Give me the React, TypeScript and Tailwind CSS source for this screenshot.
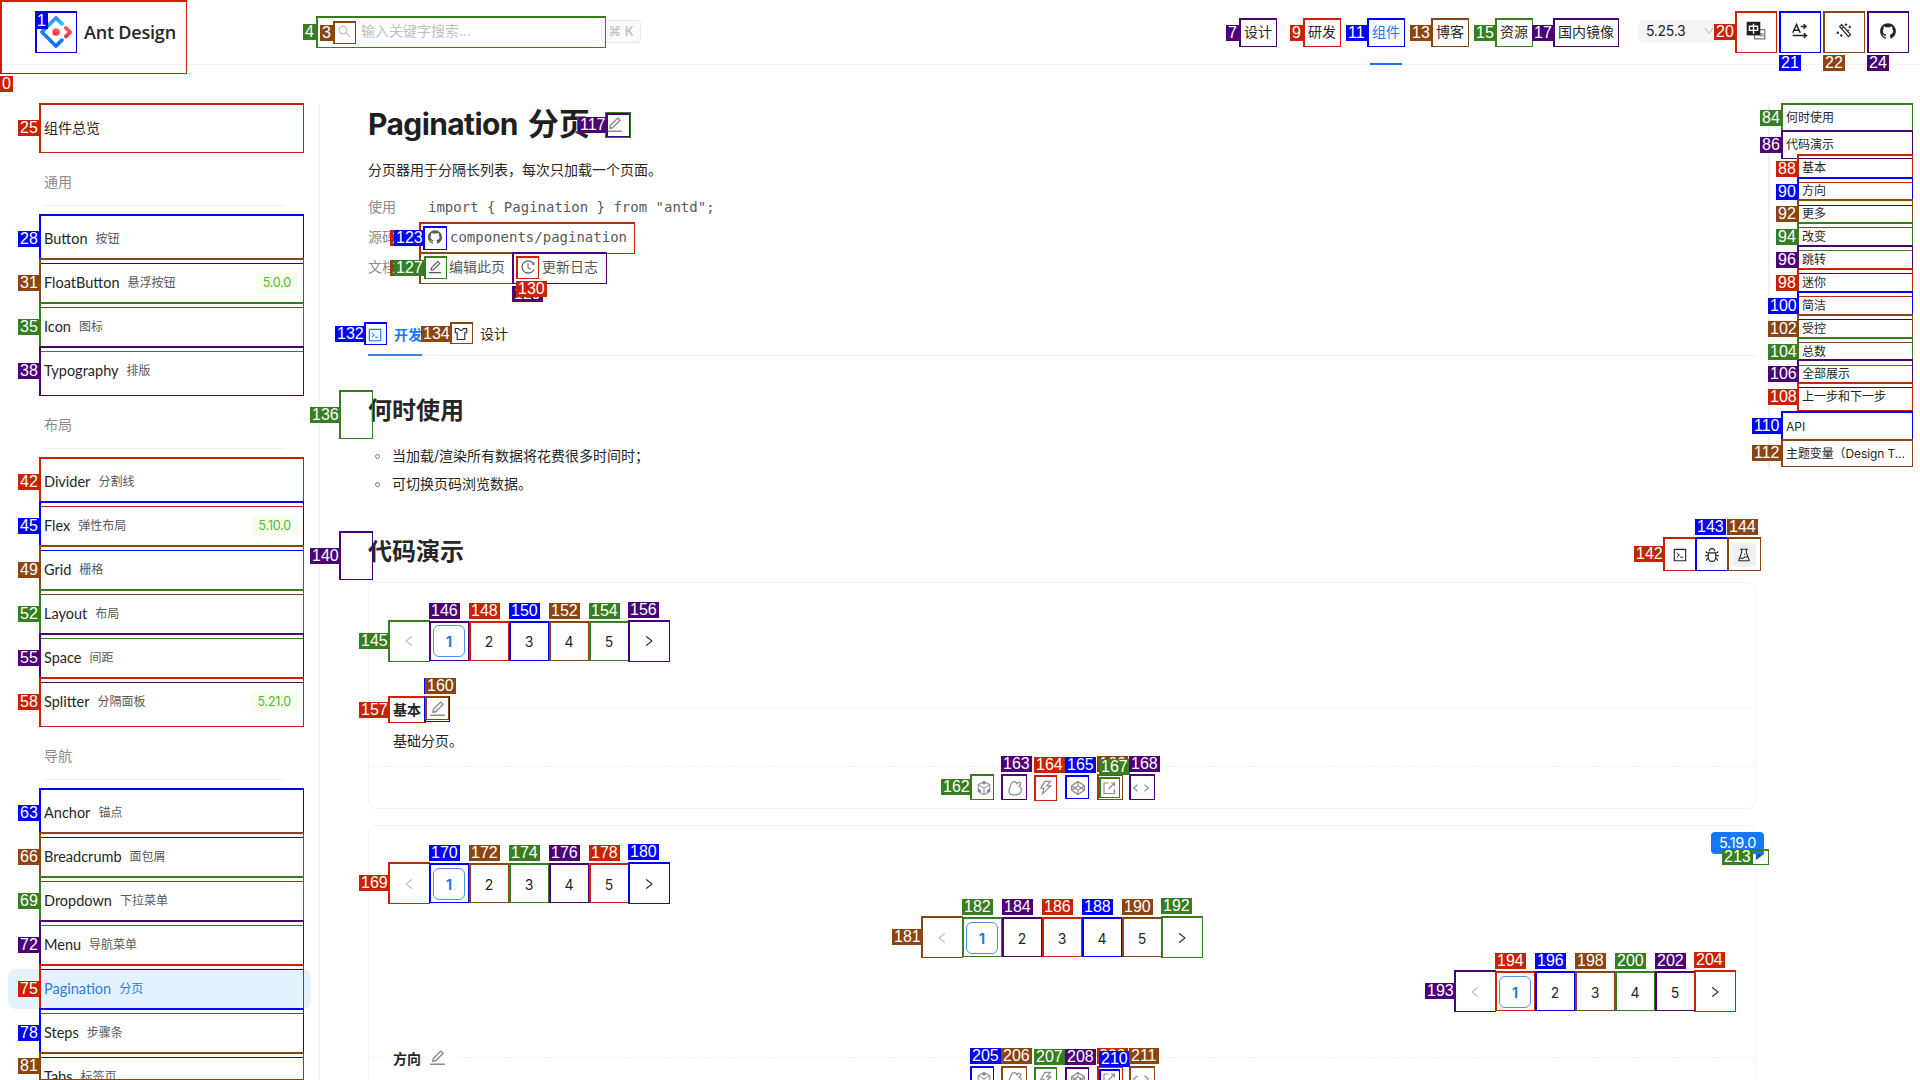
import React from 'react';
import {
  AiOutlineSearch, AiOutlineDown, AiFillGithub, AiOutlineEdit, AiOutlineHistory, AiOutlineSkin,
  AiOutlineCode, AiOutlineBug, AiOutlineExperiment, AiOutlineThunderbolt, AiOutlineCodepen,
  AiOutlineCodeSandbox, AiOutlineLeft, AiOutlineRight,
} from 'react-icons/ai';

type Tone = 'r' | 'b' | 'n' | 'g' | 'p';
// id, tone, box [left, top, right, bottom], label [left, top]
type Mark = [number, Tone, number, number, number, number, number, number];

const FILL: Record<Tone, string> = {
  r: 'bg-[#c92200]', b: 'bg-[#0000ff]', n: 'bg-[#8b4513]', g: 'bg-[#377d22]', p: 'bg-[#4b0076]',
};
const LINE: Record<Tone, string> = {
  r: 'border-[#c92200]', b: 'border-[#0000ff]', n: 'border-[#8b4513]', g: 'border-[#377d22]', p: 'border-[#4b0076]',
};

const side = (id: number, tone: Tone, top: number): Mark => [id, tone, 39, top, 304, top + 50, 18, top + 17];
const sub = (id: number, tone: Tone, top: number): Mark =>
  [id, tone, 1797, top, 1913, top + 29, id > 99 ? 1768 : 1776, top + 7];
const pager = (ids: number[], tones: Tone[], x: number, y: number): Mark[] =>
  ids.map((id, i): Mark => {
    if (i === 0) return [id, tones[i], x, y, x + 42, y + 42, x - 29, y + 13];
    if (i === 6) return [id, tones[i], x + 240, y, x + 282, y + 42, x + 240, y - 18];
    const l = x + 1 + i * 40;
    return [id, tones[i], l, y + 1, l + 40, y + 41, l, y - 17];
  });

const MARKS: Mark[] = [
  [0, 'r', 0, 0, 187, 74, 0, 76],
  [1, 'b', 35, 11, 77, 53, 35, 13],
  [4, 'g', 316, 16, 606, 48, 303, 24],
  [3, 'n', 333, 21, 356, 44, 320, 25],
  [7, 'p', 1239, 18, 1277, 47, 1226, 25],
  [9, 'r', 1303, 18, 1341, 47, 1290, 25],
  [11, 'b', 1367, 18, 1405, 47, 1346, 25],
  [13, 'n', 1431, 18, 1469, 47, 1410, 25],
  [15, 'g', 1495, 18, 1533, 47, 1474, 25],
  [17, 'p', 1553, 18, 1619, 47, 1532, 25],
  [20, 'r', 1735, 11, 1777, 53, 1714, 24],
  [21, 'b', 1779, 11, 1821, 53, 1779, 55],
  [22, 'n', 1823, 11, 1865, 53, 1823, 55],
  [24, 'p', 1867, 11, 1909, 53, 1867, 55],
  side(25, 'r', 103),
  side(28, 'b', 214), side(31, 'n', 258), side(35, 'g', 302), side(38, 'p', 346),
  side(42, 'r', 457), side(45, 'b', 501), side(49, 'n', 545), side(52, 'g', 589), side(55, 'p', 633), side(58, 'r', 677),
  side(63, 'b', 788), side(66, 'n', 832), side(69, 'g', 876), side(72, 'p', 920), side(75, 'r', 964), side(78, 'b', 1008),
  [81, 'n', 39, 1052, 304, 1080, 18, 1058],
  [84, 'g', 1781, 103, 1913, 131, 1760, 110],
  [86, 'p', 1781, 130, 1913, 159, 1760, 137],
  sub(88, 'r', 154), sub(90, 'b', 177), sub(92, 'n', 199), sub(94, 'g', 222), sub(96, 'p', 245), sub(98, 'r', 268),
  sub(100, 'b', 291), sub(102, 'n', 314), sub(104, 'g', 337), sub(106, 'p', 359), sub(108, 'r', 382),
  [110, 'b', 1781, 411, 1913, 440, 1752, 418],
  [112, 'n', 1781, 439, 1913, 467, 1752, 445],
  [116, 'g', 605, 112, 631, 138, 577, 117],
  [117, 'p', 606, 113, 630, 137, 578, 117],
  [122, 'r', 419, 222, 635, 254, 390, 230],
  [123, 'b', 423, 226, 447, 250, 394, 230],
  [126, 'n', 419, 252, 513, 284, 390, 260],
  [127, 'g', 424, 256, 447, 279, 394, 260],
  [129, 'p', 512, 252, 607, 284, 512, 286],
  [130, 'r', 516, 256, 539, 279, 516, 281],
  [132, 'b', 364, 322, 387, 345, 335, 326],
  [134, 'n', 450, 322, 473, 344, 421, 326],
  [136, 'g', 339, 390, 373, 439, 310, 407],
  [140, 'p', 339, 531, 373, 580, 310, 548],
  [142, 'r', 1663, 537, 1696, 571, 1634, 546],
  [143, 'b', 1695, 537, 1728, 571, 1695, 519],
  [144, 'n', 1727, 537, 1761, 571, 1727, 519],
  ...pager([145, 146, 148, 150, 152, 154, 156], ['g', 'p', 'r', 'b', 'n', 'g', 'p'], 388, 620),
  [157, 'r', 388, 696, 426, 723, 359, 702],
  [159, 'b', 424, 696, 450, 722, 424, 678],
  [160, 'n', 425, 696, 449, 720, 425, 678],
  [162, 'g', 970, 774, 994, 800, 941, 779],
  [163, 'p', 1001, 774, 1027, 800, 1001, 756],
  [164, 'r', 1034, 775, 1057, 801, 1034, 757],
  [165, 'b', 1065, 775, 1089, 799, 1065, 757],
  [166, 'n', 1097, 774, 1123, 800, 1097, 756],
  [167, 'g', 1099, 777, 1120, 798, 1099, 759],
  [168, 'p', 1129, 774, 1155, 800, 1129, 756],
  ...pager([169, 170, 172, 174, 176, 178, 180], ['r', 'b', 'n', 'g', 'p', 'r', 'b'], 388, 862),
  ...pager([181, 182, 184, 186, 188, 190, 192], ['n', 'g', 'p', 'r', 'b', 'n', 'g'], 921, 916),
  ...pager([193, 194, 196, 198, 200, 202, 204], ['p', 'r', 'b', 'n', 'g', 'p', 'r'], 1454, 970),
  [205, 'b', 970, 1066, 994, 1092, 970, 1048],
  [206, 'n', 1001, 1066, 1027, 1092, 1001, 1048],
  [207, 'g', 1034, 1067, 1057, 1093, 1034, 1049],
  [208, 'p', 1065, 1067, 1089, 1091, 1065, 1049],
  [209, 'r', 1097, 1066, 1123, 1092, 1097, 1048],
  [210, 'b', 1099, 1069, 1120, 1090, 1099, 1051],
  [211, 'n', 1129, 1066, 1155, 1092, 1129, 1048],
  [213, 'g', 1751, 849, 1769, 865, 1722, 849],
];

function MarkLayer() {
  return (
    <div className="pointer-events-none absolute inset-0 z-20">
      {MARKS.map(([id, tone, l, t, r, b]) => (
        <div key={id} className={`absolute border-t-2 border-l-2 border-r border-b ${LINE[tone]}`}
          style={{ left: l, top: t, width: r - l, height: b - t }} />
      ))}
      {MARKS.map(([id, tone, , , , , x, y]) => (
        <span key={id} className={`absolute h-4 px-[2px] font-["Liberation_Sans",sans-serif] text-[16px] leading-4 text-white ${FILL[tone]}`}
          style={{ left: x, top: y }}>{id}</span>
      ))}
    </div>
  );
}

function Logo() {
  return (
    <svg viewBox="0 0 200 200" className="size-8">
      <defs>
        <linearGradient id="lg1" x1="62%" y1="0%" x2="108%" y2="64%">
          <stop offset="0" stopColor="#4285EB" /><stop offset="1" stopColor="#2EC7FF" />
        </linearGradient>
        <linearGradient id="lg2" x1="69%" y1="0%" x2="54%" y2="108%">
          <stop offset="0" stopColor="#29CDFF" /><stop offset=".38" stopColor="#148EFF" /><stop offset="1" stopColor="#0A60FF" />
        </linearGradient>
        <linearGradient id="lg3" x1="69%" y1="-13%" x2="17%" y2="115%">
          <stop offset="0" stopColor="#FA816E" /><stop offset=".41" stopColor="#F74A5C" /><stop offset="1" stopColor="#F51D2C" />
        </linearGradient>
      </defs>
      <path fill="url(#lg2)" d="M91.6 4.2 4.2 91.5a11.800 11.800 0 0 0 0 16.700l87.400 87.300a11.800 11.800 0 0 0 16.700 0l36.600-36.600c4.500-4.500 4.500-11.900 0-16.400s-11.800-4.500-16.400 0l-27.400 27.700c-1.200 1.200-2.900 1.200-4 0l-68.500-68.400c-1.200-1.200-1.200-2.900 0-4l68.500-68.400c1.100-1.200 2.800-1.200 4 0l27.400 27.600c4.600 4.500 11.900 4.500 16.400 0s4.500-11.900 0-16.400L108 4.100c-4.600-4.500-12-4.500-16.400.1Z" />
      <path fill="url(#lg1)" d="M91.600 4.200 50 46l17 17 30-33.600c1.100-1.200 2.800-1.200 4 0l27.400 27.600c4.600 4.500 11.900 4.500 16.400 0s4.500-11.900 0-16.400L108 4.100c-4.600-4.500-12-4.500-16.400.1Z" />
      <path fill="url(#lg3)" d="M153.700 135.900c4.500 4.500 11.800 4.500 16.400 0l26.500-26.600a11.700 11.700 0 0 0 0-16.600l-26.800-26.700c-4.500-4.500-11.900-4.500-16.400 0s-4.500 11.900 0 16.400l16.700 16.700c1.200 1.200 1.200 2.900 0 4l-16.400 16.400c-4.500 4.500-4.500 11.900 0 16.400Z" />
      <circle cx="100.800" cy="100.400" r="23.600" fill="url(#lg3)" />
    </svg>
  );
}

const LangIcon = () => (
  <svg viewBox="0 0 20 20" className="size-5">
    <path fill="#fff" stroke="#777" strokeWidth="1.200" d="M8.600 8.600h10.200v9.300H8.600z" />
    <path fill="none" stroke="#777" strokeWidth="1.100" d="M14.900 15.800v-3.600M14.900 13.200q2.100-1.300 2.100.8v1.800" />
    <path fill="#1f1f1f" d="M.7.800h13.600v13.600H.7z" />
    <path fill="none" stroke="#fff" strokeWidth="1.400" d="M3.400 5.200h8.200v4.200H3.400zM7.500 2.700v10" />
  </svg>
);
const DirectionIcon = () => (
  <svg viewBox="0 0 20 20" className="size-5" fill="none" stroke="#222" strokeWidth="1.500">
    <path d="M2.800 11.800 6.500 3.500l3.700 8.300M4.100 9.200h4.700M10.800 5.500h5M13.600 3.300 16 5.500l-2.400 2.200M2.800 14.600h13.500M13.800 12.200l2.600 2.400-2.600 2.400" />
  </svg>
);
const ThemeIcon = () => (
  <svg viewBox="0 0 20 20" className="size-5" fill="none" stroke="#222" strokeWidth="1.200">
    <path d="m5.600 5.600 2-1.900 8.900 10-2 1.900zM7.500 7.700l1.900-1.800" />
    <path d="M10.800 3.600h2.400M12 2.400V4.800M14.500 6h2.600M15.800 4.700v2.600M2.600 11.800H5M3.800 10.600V13M6 14.500h2.600M7.300 13.200v2.600M13.500 9.300h1.500" />
  </svg>
);
const StackIcon = () => (
  <svg viewBox="0 0 16 16" className="size-4" fill="none" stroke="currentColor" strokeWidth="1.200">
    <path d="M4.200 3.900C5.300 1.600 7.700.8 9 2.300c.5.600.6 1.300.4 2 .7-1.200 1.800-2.400 3.200-1.900 1.600.6 1.100 2.900-.4 3.900 1.500.6 2.300 1.900 2.100 3.600-.3 3-2.300 4.900-5.400 4.900H5.700c-2.700 0-4.200-2-3.700-4.900z" />
  </svg>
);
const OpenIcon = () => (
  <svg viewBox="0 0 16 16" className="size-4" fill="none" stroke="currentColor" strokeWidth="1.200">
    <path d="M7.500 3H3v10.500h10.500V9M10 3h3.500v3.500M13.300 3.200 7.500 9" />
  </svg>
);
const ExpandIcon = () => (
  <svg viewBox="0 0 18 16" className="h-4 w-[18px]" fill="none" stroke="currentColor" strokeWidth="1.200">
    <path d="M5.500 4.800 1.700 8l3.800 3.200M12.500 4.800 16.300 8l-3.800 3.200" />
  </svg>
);

function Header() {
  return (
    <header className="flex h-[65px] shrink-0 items-center border-b border-[#f3f3f3] text-sm text-[#262626]">
      <div className="flex w-[316px] items-center pl-10">
        <Logo />
        <span className='ml-3 mt-0.5 font-["Open_Sans",sans-serif] text-[18px] font-semibold tracking-[-0.2px] whitespace-nowrap'>Ant Design</span>
      </div>
      <div className="-mt-0.5 flex w-[285px] items-center border-l border-[#f0f0f0] pl-[20px] text-[#bfbfbf]">
        <AiOutlineSearch className="size-[15px]" />
        <span className="ml-[9px]">输入关键字搜索...</span>
      </div>
      <kbd className='-mt-0.5 flex h-[23px] w-10 items-center justify-center rounded border border-[#e8e8e8] bg-[#fafafa] font-["Inter","DejaVu_Sans",sans-serif] text-[13px] font-medium text-[#bfbfbf]'>⌘ K</kbd>
      <nav className="ml-[603px] flex h-full items-center">
        {['设计', '研发', '组件', '博客', '资源', '国内镜像'].map((t) => (
          <span key={t} className={t === '组件'
            ? 'relative mr-9 flex h-full items-center text-[#1677ff] after:absolute after:bottom-[-1px] after:left-[-2px] after:h-0.5 after:w-8 after:bg-[#1677ff]'
            : t === '资源' ? 'mr-[30px]' : t === '国内镜像' ? '' : 'mr-9'}>{t}</span>
        ))}
      </nav>
      <div className="-mt-0.5 ml-[24px] flex h-[23px] w-[89px] items-center justify-between rounded-md bg-[#f5f5f5] pr-3 pl-2">
        <span className="tracking-[-0.3px]">5.25.3</span>
        <AiOutlineDown className="size-3 text-[#bfbfbf]" />
      </div>
      <div className="-mt-0.5 ml-[19px] flex items-center gap-6">
        <LangIcon /><DirectionIcon /><ThemeIcon /><AiFillGithub className="ml-px size-[18px]" />
      </div>
    </header>
  );
}

const GROUPS: { title: string; items: [string, string, string?][] }[] = [
  { title: '通用', items: [['Button', '按钮'], ['FloatButton', '悬浮按钮', '5.0.0'], ['Icon', '图标'], ['Typography', '排版']] },
  { title: '布局', items: [['Divider', '分割线'], ['Flex', '弹性布局', '5.10.0'], ['Grid', '栅格'], ['Layout', '布局'], ['Space', '间距'], ['Splitter', '分隔面板', '5.21.0']] },
  { title: '导航', items: [['Anchor', '锚点'], ['Breadcrumb', '面包屑'], ['Dropdown', '下拉菜单'], ['Menu', '导航菜单'], ['Pagination', '分页'], ['Steps', '步骤条'], ['Tabs', '标签页']] },
];

function Sidebar() {
  return (
    <aside className="mt-[39px] w-80 shrink-0 border-r border-[#efefef] pr-2 pl-2 text-sm text-[#262626]">
      <div className="mt-1 flex h-10 items-center pl-9">组件总览</div>
      {GROUPS.map((g) => (
        <section key={g.title}>
          <div className="h-[71px] pl-9">
            <div className="h-[58px] w-60 border-b border-[#f0f0f0] pt-[23px] leading-[22px] text-[#8c8c8c]">{g.title}</div>
          </div>
          <div className="flex flex-col gap-1">
            {g.items.map(([en, zh, tag]) => (
              <div key={en} className={en === 'Pagination'
                ? 'flex h-10 items-center rounded-lg bg-[#e4f2fd] pl-9 text-[#2b7de0]'
                : 'flex h-10 items-center pl-9'}>
                <span className='pt-px font-["Lato","Noto_Sans_CJK_SC",sans-serif] text-[14.500px]'>{en}</span>
                <span className={en === 'Pagination' ? 'ml-2 text-xs' : 'ml-2 text-xs text-[#595959]'}>{zh}</span>
                {tag && <span className="mr-[13px] ml-auto rounded bg-[#f6ffed] px-[7px] text-[12.500px] leading-[22px] tracking-[-0.2px] text-[#52b82a]">{tag}</span>}
              </div>
            ))}
          </div>
        </section>
      ))}
    </aside>
  );
}

function Pager({ className = '' }: { className?: string }) {
  return (
    <div className={`flex h-8 gap-2 ${className}`}>
      <span className="flex size-8 items-center justify-center text-[#bfbfbf]"><AiOutlineLeft className="size-3.5" /></span>
      <span className="flex size-8 items-center justify-center rounded-md border border-[#4c93ea] pt-px font-bold text-[#2478e8]">1</span>
      {['2', '3', '4', '5'].map((n) => <span key={n} className="flex size-8 items-center justify-center pt-px">{n}</span>)}
      <span className="flex size-8 items-center justify-center"><AiOutlineRight className="size-3.5" /></span>
    </div>
  );
}

function CardTitle({ children, line }: { children: React.ReactNode; line?: boolean }) {
  return (
    <div className="flex h-[22px] items-center">
      <div className={line ? 'h-px w-4 bg-[#f5f5f5]' : 'w-4'} />
      <span className="relative z-10 flex items-center bg-white px-2 pt-[3px] font-bold">
        {children}<AiOutlineEdit className="-mt-0.5 ml-[7px] size-[19px] text-[#8c8c8c]" />
      </span>
      <div className={line ? 'h-px flex-1 bg-[#f5f5f5]' : 'flex-1'} />
    </div>
  );
}

function Actions() {
  return (
    <div className="flex h-[42px] items-center justify-center gap-3.5 border-t border-dashed border-[#f0f0f0] text-[#8c8c8c]">
      <AiOutlineCodeSandbox className="size-[18px]" />
      <StackIcon />
      <AiOutlineThunderbolt className="size-[18px]" />
      <AiOutlineCodepen className="size-[18px]" />
      <OpenIcon />
      <span className="ml-px"><ExpandIcon /></span>
    </div>
  );
}

function Main() {
  return (
    <main className="w-[1388px] shrink-0 pt-[39px] text-sm text-[#262626]">
      <h1 className="flex h-10 items-center text-[30px] font-bold text-[#1f1f1f]">
        <span className="tracking-[-0.6px]">Pagination</span><span className="ml-[10px] text-[31px]">分页</span><AiOutlineEdit className="ml-[15px] size-[19px] text-[#8c8c8c]" />
      </h1>
      <p className="mt-[15px] leading-[22px]">分页器用于分隔长列表，每次只加载一个页面。</p>
      <div className="mt-[11px] grid grid-cols-[60px_auto] auto-rows-[30px] items-center text-[#595959]">
        <span className="text-[#8c8c8c]">使用</span>
        <span className='font-["DejaVu_Sans_Mono",monospace]'>{'import { Pagination } from "antd";'}</span>
        <span className="text-[#8c8c8c]">源码</span>
        <span className='-ml-px flex items-center gap-[7px] font-["DejaVu_Sans_Mono",monospace]'><AiFillGithub className="size-4" />components/pagination</span>
        <span className="text-[#8c8c8c]">文档</span>
        <span className="-ml-px flex items-center">
          <AiOutlineEdit className="mr-[6px] size-4" />编辑此页
          <AiOutlineHistory className="mr-[6px] ml-[15px] size-4" />更新日志
        </span>
      </div>
      <div className="mt-[32px] flex h-[42px] border-b border-[#f0f0f0]">
        <div className="flex h-[42px] items-center border-b-2 border-[#3a84e4] pt-0.5 font-bold text-[#1677ff]">
          <AiOutlineCode className="mr-[11px] -ml-px size-4" />开发
        </div>
        <div className="ml-[31px] flex h-10 items-center"><AiOutlineSkin className="mr-[11px] size-4" />设计</div>
      </div>
      <h2 className="mt-[39px] text-2xl leading-8 font-bold">何时使用</h2>
      <ul className="mt-[15px]">
        {['当加载/渲染所有数据将花费很多时间时；', '可切换页码浏览数据。'].map((t) => (
          <li key={t} className="flex h-7 items-center"><i className="mr-3 ml-[7px] size-[5px] rounded-full border border-[#777]" />{t}</li>
        ))}
      </ul>
      <div className="mt-[38px] flex h-8 items-center justify-between">
        <h2 className="text-2xl leading-8 font-bold">代码演示</h2>
        <div className="mt-1.5 flex gap-2">
          <span className="flex size-6 items-center justify-center"><AiOutlineCode className="size-4" /></span>
          <span className="flex size-6 items-center justify-center"><AiOutlineBug className="size-4" /></span>
          <span className="flex size-6 items-center justify-center rounded bg-[#f0f0f0]"><AiOutlineExperiment className="size-4" /></span>
        </div>
      </div>
      <section className="mt-3.5 rounded-lg border border-[#f3f3f3]">
        <Pager className="mt-[42px] ml-6" />
        <div className="mt-[40px]"><CardTitle line>基本</CardTitle></div>
        <p className="mt-[11px] mb-3.5 ml-6 leading-[22px]">基础分页。</p>
        <Actions />
      </section>
      <section className="relative mt-4 rounded-lg border border-[#f3f3f3]">
        <Pager className="mt-[42px] ml-6" />
        <Pager className="mt-[22px] justify-center" />
        <Pager className="mt-[22px] mr-6 justify-end" />
        <div className="mt-[38px]"><CardTitle>方向</CardTitle></div>
        <div className="-mt-[11px]"><Actions /></div>
        <div className="absolute top-1.5 right-[-9px] h-[22px] rounded rounded-br-none bg-[#1677ff] px-2 text-[14.500px] leading-[22px] tracking-[-0.300px] text-white">5.19.0</div>
        <div className="absolute top-7 right-[-9px] size-2 bg-[#1356b8] [clip-path:polygon(0_0,100%_0,0_75%)]" />
      </section>
    </main>
  );
}

function Toc() {
  const subs = ['基本', '方向', '更多', '改变', '跳转', '迷你', '简洁', '受控', '总数', '全部展示', '上一步和下一步'];
  return (
    <aside className="mt-[39px] ml-3 h-[364px] w-[145px] shrink-0 border-l-2 border-[#f0f0f0] pl-4 text-xs text-[#262626]">
      <div className="flex h-7 items-center">何时使用</div>
      <div className="flex h-[25px] items-center">代码演示</div>
      <div className="pl-4">
        {subs.map((s) => <div key={s} className="flex h-[22.900px] items-center">{s}</div>)}
      </div>
      <div className="mt-1 flex h-7 items-center">API</div>
      <div className="flex h-[27px] items-center tracking-[-0.1px] whitespace-nowrap">主题变量（Design T...</div>
    </aside>
  );
}

export default function App() {
  return (
    <div className='relative flex h-[1080px] w-[1920px] flex-col overflow-hidden bg-white font-["Inter","Noto_Sans_CJK_SC",sans-serif]'>
      <Header />
      <div className="flex h-[1015px] shrink-0 overflow-hidden">
        <Sidebar />
        <div className="w-12 shrink-0" />
        <Main />
        <Toc />
      </div>
      <MarkLayer />
    </div>
  );
}
